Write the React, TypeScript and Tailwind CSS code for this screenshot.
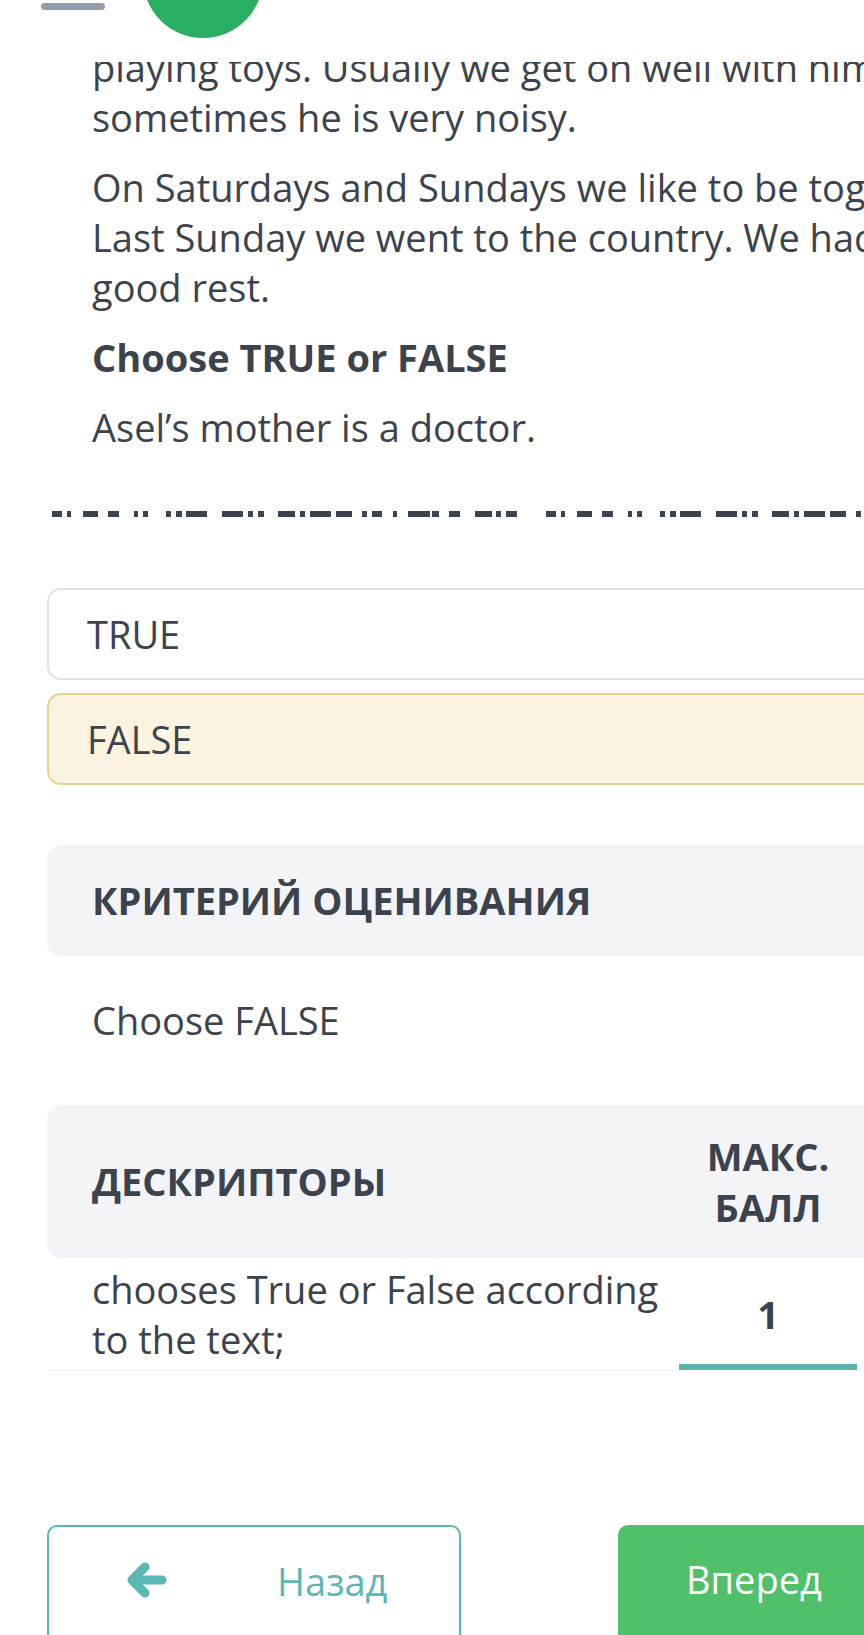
import React from 'react';

// 중간에 끊긴 빈칸(밑줄) — 불규칙한 점선 패턴, 494px 주기로 반복
const DASHES: [number, number][] = [
  [0, 10], [15, 19], [31, 46], [56, 67], [82, 86], [91, 96], [114, 119], [124, 130],
  [134, 155], [170, 191], [196, 201], [206, 212], [226, 243], [248, 253], [258, 279],
  [284, 300], [310, 315], [320, 330], [341, 345], [356, 378], [380, 387], [397, 408],
  [423, 440], [444, 449], [454, 465],
];
const PERIOD = 494;

function BlankLine() {
  const segs: [number, number][] = [];
  for (let k = 0; k < 2; k++) {
    DASHES.forEach(([a, b]) => segs.push([a + k * PERIOD, b + k * PERIOD]));
  }
  return (
    <svg width="830" height="6" viewBox="0 0 830 6" className="block">
      {segs.map(([a, b], i) => (
        <rect key={i} x={a} y={0} width={b - a} height={6} fill="#3d434c" />
      ))}
    </svg>
  );
}

function ArrowLeft() {
  return (
    <svg width="42" height="40" viewBox="0 0 42 40" fill="none">
      <path
        d="M37 20H8M20 7L7 20L20 33"
        stroke="#5bb7b1"
        strokeWidth="9"
        strokeLinecap="round"
        strokeLinejoin="round"
      />
    </svg>
  );
}

export default function App() {
  return (
    <div className="relative h-[1635px] w-[864px] overflow-hidden bg-white font-['Open_Sans',sans-serif] text-[#3d434c]">
      {/* 상단 고정 헤더 — 본문 첫 줄을 덮는다 */}
      <div className="absolute inset-x-0 top-0 z-10 h-[62px] bg-white">
        <div className="absolute left-[41px] top-[3px] h-[7px] w-[64px] rounded-full bg-[#8f9db1]" />
        <div className="absolute left-[143px] top-[-82px] h-[120px] w-[120px] rounded-full bg-[#2aaf62]" />
      </div>

      <div className="ml-[47px] w-[843px] pt-[42px]">
        {/* 본문 텍스트 */}
        <div className="flex flex-col gap-[20px] whitespace-nowrap pl-[45px] text-[38px] leading-[50px]">
          <p>
            playing toys. Usually we get on well with him but
            <br />
            sometimes he is very noisy.
          </p>
          <p>
            On Saturdays and Sundays we like to be together.
            <br />
            Last Sunday we went to the country. We had a
            <br />
            good rest.
          </p>
          <p className="font-bold">Choose TRUE or FALSE</p>
          <p>Asel’s mother is a doctor.</p>
        </div>

        <div className="mt-[59px] pl-[5px]">
          <BlankLine />
        </div>

        {/* 선택지 */}
        <div className="mt-[71px] flex flex-col gap-[13px] text-[38px]">
          <div className="flex h-[92px] items-center rounded-[14px] border-2 border-[#e2e2e2] bg-white pl-[38px]">
            TRUE
          </div>
          <div className="flex h-[92px] items-center rounded-[14px] border-2 border-[#e8d48e] bg-[#fbf3e0] pl-[38px]">
            FALSE
          </div>
        </div>

        {/* 평가 기준 */}
        <div className="mt-[60px] flex h-[111px] items-center rounded-[14px] bg-[#f3f4f8] pl-[45px] text-[38px] font-bold">
          КРИТЕРИЙ ОЦЕНИВАНИЯ
        </div>
        <p className="mt-[39px] pl-[45px] text-[38px] leading-[50px]">Choose FALSE</p>

        {/* 디스크립터 표 */}
        <div className="mt-[60px]">
          <div className="grid h-[153px] grid-cols-[632px_178px_1fr] items-center rounded-[14px] bg-[#f3f4f8] text-[38px] font-bold">
            <div className="pl-[45px]">ДЕСКРИПТОРЫ</div>
            <div className="text-center leading-[51px]">
              МАКС.
              <br />
              БАЛЛ
            </div>
            <div />
          </div>
          <div className="grid grid-cols-[632px_178px_1fr] text-[38px] leading-[50px]">
            <div className="h-[113px] border-b border-[#eef0f3] pl-[45px] pt-[6px]">
              chooses True or False according
              <br />
              to the text;
            </div>
            <div className="flex h-[112px] items-center justify-center border-b-[6px] border-[#5bb5ae] pt-[6px] font-bold">
              1
            </div>
            <div />
          </div>
        </div>

        {/* 하단 버튼 */}
        <div className="mt-[154px] flex gap-[157px]">
          <button
            type="button"
            className="flex h-[130px] w-[416px] items-start rounded-[10px] border-2 border-[#5bb7b1] bg-white pl-[76px] pt-[33px] text-[38px] text-[#5bb7b1]"
          >
            <ArrowLeft />
            <span className="ml-[110px] leading-[42px]">Назад</span>
          </button>
          <button
            type="button"
            className="flex h-[130px] w-[274px] items-start justify-center rounded-[10px] bg-[#50c06b] pt-[33px] text-[38px] leading-[42px] text-white"
          >
            Вперед
          </button>
        </div>
      </div>
    </div>
  );
}
